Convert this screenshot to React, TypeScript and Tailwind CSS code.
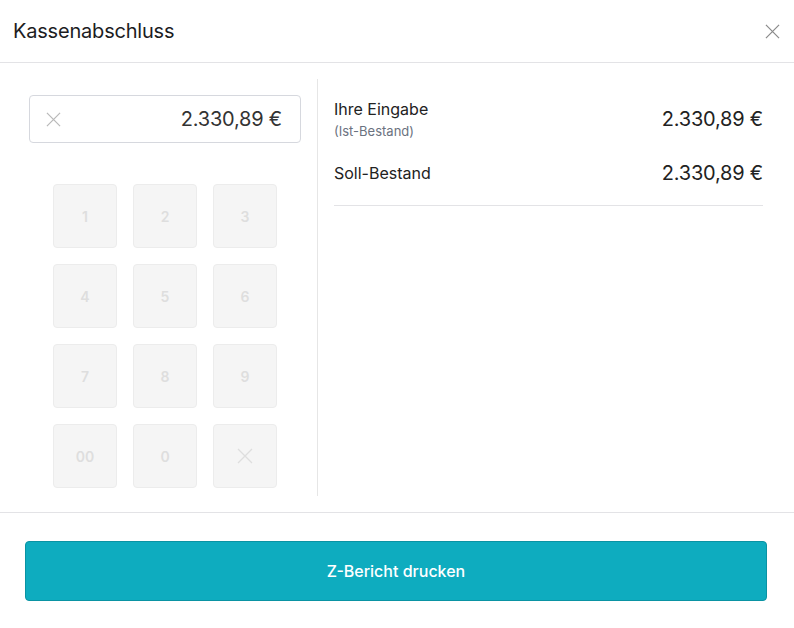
const keys = ["1", "2", "3", "4", "5", "6", "7", "8", "9", "00", "0"];

const Cross = ({ size, className }: { size: number; className: string }) => (
  <svg width={size} height={size} viewBox="0 0 16 16" className={className}>
    <path d="M1 1 L15 15 M15 1 L1 15" stroke="currentColor" strokeWidth="1.3" fill="none" />
  </svg>
);

const App = () => {
  return (
    <div className="w-[794px] h-[628px] bg-white flex flex-col font-['Inter',sans-serif] text-[#222]">
      <div className="h-[63px] shrink-0 flex items-center justify-between pl-[13px] pr-[14px] border-b border-[#e3e3e6]">
        <span className="text-[20px] text-[#1d1d1f] tracking-[-0.2px]">Kassenabschluss</span>
        <Cross size={15} className="text-[#8a8a8a]" />
      </div>

      <div className="h-[450px] shrink-0 flex py-4 border-b border-[#e3e3e6]">
        <div className="w-[318px] shrink-0 pl-[29px] pr-4 pt-4 border-r border-[#e6e6e6] flex flex-col">
          <div className="h-[48px] rounded border border-[#d6d8de] flex items-center justify-between pl-4 pr-[18px]">
            <Cross size={15} className="text-[#b9b9b9]" />
            <span className="text-[20px] text-[#333] tracking-[-0.2px]">2.330,89 €</span>
          </div>
          <div className="grid grid-cols-[64px_64px_64px] gap-4 self-center mt-[41px]">
            {keys.map((k) => (
              <div
                key={k}
                className="w-16 h-16 rounded bg-[#f5f5f5] border border-[#ececec] flex items-center justify-center text-[14px] font-semibold text-[#dedede]"
              >
                {k}
              </div>
            ))}
            <div className="w-16 h-16 rounded bg-[#f5f5f5] border border-[#ececec] flex items-center justify-center">
              <Cross size={16} className="text-[#dedede]" />
            </div>
          </div>
        </div>

        <div className="flex-1 pl-4 pr-[31px] pt-[18px]">
          <div className="flex flex-col gap-[17px] pb-[17px] border-b border-[#e3e3e6]">
            <div className="flex items-center justify-between">
              <div className="flex flex-col">
                <span className="text-[16px] leading-6">Ihre Eingabe</span>
                <span className="text-[13px] leading-5 text-[#6b7280]">(Ist-Bestand)</span>
              </div>
              <span className="text-[20px] tracking-[-0.2px]">2.330,89 €</span>
            </div>
            <div className="flex items-center justify-between">
              <span className="text-[16px] leading-6">Soll-Bestand</span>
              <span className="text-[20px] tracking-[-0.2px]">2.330,89 €</span>
            </div>
          </div>
        </div>
      </div>

      <div className="flex-1 pl-[25px] pr-[27px] pt-7">
        <button className="w-full h-[60px] rounded bg-[#0eacbf] border border-[#0a93a3] text-white text-[16px] font-medium flex items-center justify-center">
          Z-Bericht drucken
        </button>
      </div>
    </div>
  );
};

export default App;
